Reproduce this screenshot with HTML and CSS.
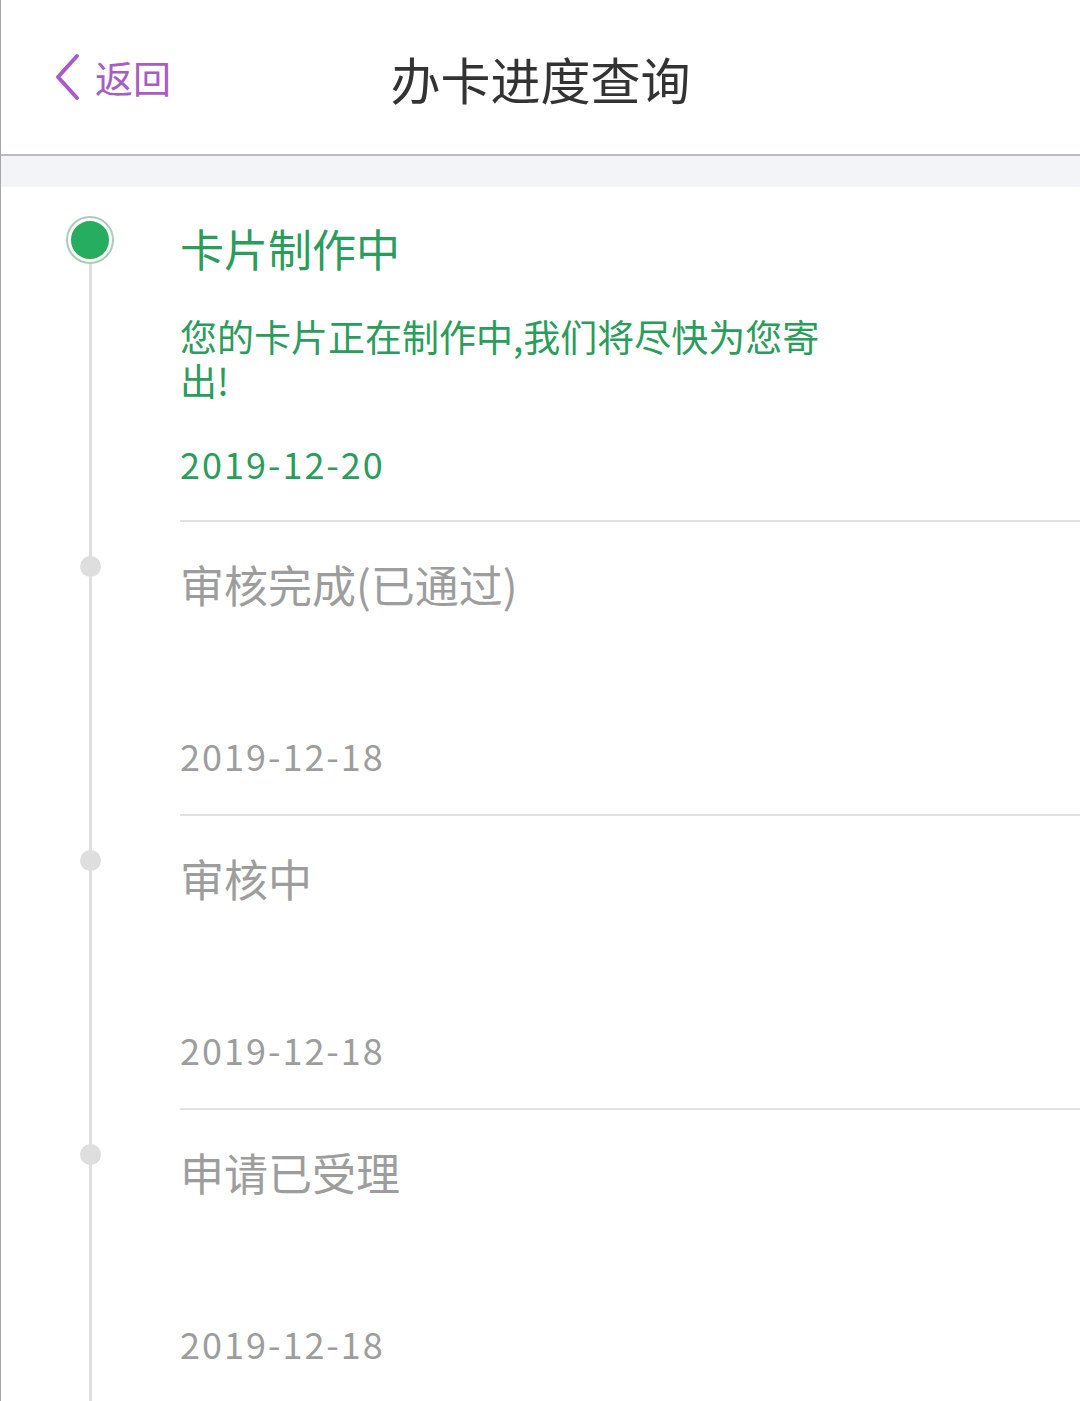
FILE: index.html
```html
<!DOCTYPE html>
<html lang="zh-CN">
<head>
    <title>办卡进度查询</title>
    <meta charset="UTF-8">
    <link rel="stylesheet" href="styles.css">
</head>
<body>
    <div class="page">
        <div class="header">
            <a class="back" href="#">
                <svg class="back-icon" width="28" height="48" viewBox="0 0 28 48">
                    <path d="M24 3 L5 24 L24 45" fill="none" stroke="currentColor" stroke-width="4" stroke-linecap="round" stroke-linejoin="round"/>
                </svg>
                <span>返回</span>
            </a>
            <h1 class="title">办卡进度查询</h1>
            <div></div>
        </div>
        <div class="gap-band"></div>

        <div class="timeline">
            <div class="step current first">
                <div class="step-marker"><span class="dot"></span></div>
                <div class="step-body">
                    <div class="step-title">卡片制作中</div>
                    <div class="step-desc">您的卡片正在制作中,我们将尽快为您寄出!</div>
                    <div class="step-date">2019-12-20</div>
                </div>
            </div>
            <div class="step">
                <div class="step-marker"><span class="dot"></span></div>
                <div class="step-body">
                    <div class="step-title">审核完成(已通过)</div>
                    <div class="step-desc"></div>
                    <div class="step-date">2019-12-18</div>
                </div>
            </div>
            <div class="step">
                <div class="step-marker"><span class="dot"></span></div>
                <div class="step-body">
                    <div class="step-title">审核中</div>
                    <div class="step-desc"></div>
                    <div class="step-date">2019-12-18</div>
                </div>
            </div>
            <div class="step">
                <div class="step-marker"><span class="dot"></span></div>
                <div class="step-body">
                    <div class="step-title">申请已受理</div>
                    <div class="step-desc"></div>
                    <div class="step-date">2019-12-18</div>
                </div>
            </div>
        </div>
    </div>
</body>
</html>
```

FILE: styles.css
```css
:root {
    --purple: #a95cc6;
    --green: #2a9d5c;
    --dot-green: #27ad5f;
    --grey-text: #9d9d9d;
    --line: #dedede;
    --band: #f2f4f8;
}

html, body {
    margin: 0;
    padding: 0;
    background: #fff;
}

body {
    font-family: "Noto Sans CJK SC", "Noto Sans", sans-serif;
    color: #333;
}

.page {
    min-height: 1401px;
    border-left: 1px solid #a8a8a8;
    box-sizing: border-box;
    overflow: hidden;
}

.header {
    height: 154px;
    display: grid;
    grid-template-columns: 1fr auto 1fr;
    align-items: center;
    border-bottom: 2px solid #bcbcbc;
}

.back {
    display: flex;
    align-items: center;
    gap: 14px;
    padding-left: 52px;
    color: var(--purple);
    text-decoration: none;
    font-size: 38px;
    line-height: 1;
}

.back-icon {
    display: block;
}

.title {
    margin: 0;
    font-size: 50px;
    font-weight: 400;
    color: #333;
    padding-top: 2px;
}

.gap-band {
    height: 31px;
    background: var(--band);
}

.timeline {
    display: flex;
    flex-direction: column;
}

.step {
    display: grid;
    grid-template-columns: 179px 1fr;
}

.step-marker {
    position: relative;
}

/* vertical connector */
.step-marker::before {
    content: "";
    position: absolute;
    left: 88px;
    top: 0;
    bottom: 0;
    width: 3px;
    background: var(--line);
}

.step.first .step-marker::before {
    top: 54px;
}

.dot {
    position: absolute;
    left: 79px;
    top: 34px;
    width: 21px;
    height: 21px;
    border-radius: 50%;
    background: var(--line);
}

.step.current .dot {
    left: 67px;
    top: 31px;
    width: 38px;
    height: 38px;
    background: var(--dot-green);
    border: 3px solid #fff;
    box-shadow: 0 0 0 2px #a9cdb4;
}

.step-body {
    padding: 32px 0 37px 0;
    border-bottom: 2px solid #e2e2e2;
    color: var(--grey-text);
}

.step.current .step-body {
    padding-top: 31px;
    padding-bottom: 35px;
    color: var(--green);
}

.step-title {
    font-size: 44px;
    line-height: 60px;
}

.step-desc {
    margin: 36px 0 39px;
    min-height: 44px;
    max-width: 660px;
    font-size: 37px;
    line-height: 44px;
}

.step-date {
    font-size: 36px;
    line-height: 44px;
    letter-spacing: 2px;
}
```
